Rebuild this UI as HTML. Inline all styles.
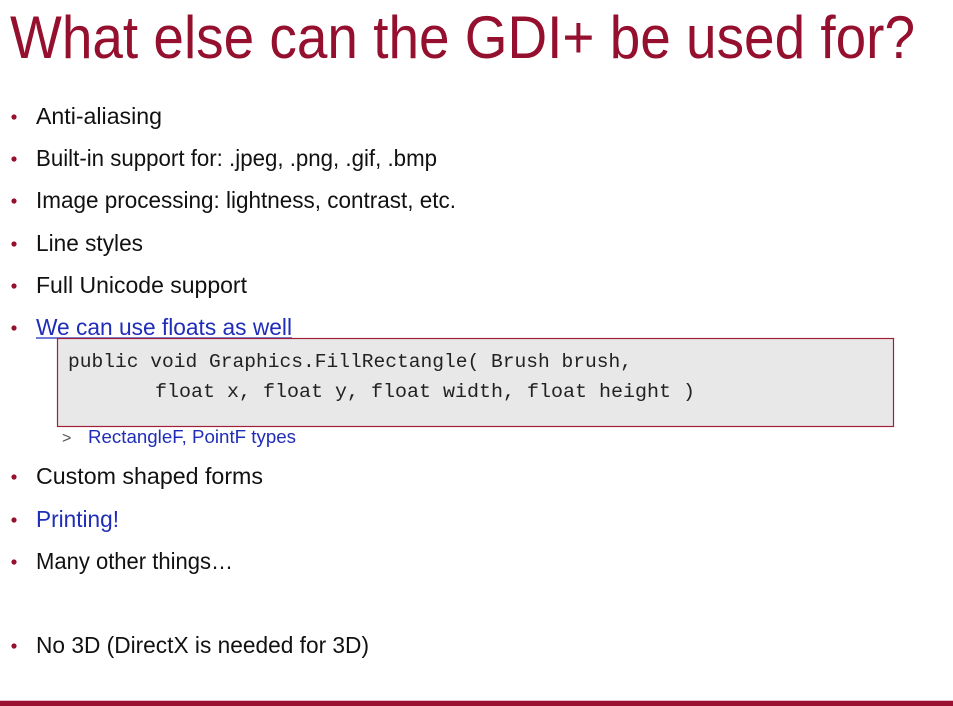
<!DOCTYPE html>
<html><head><meta charset="utf-8"><style>
html,body{margin:0;padding:0;background:#fff;width:953px;height:706px;overflow:hidden}
svg{display:block}
</style></head><body>
<svg width="953" height="706" viewBox="0 0 953 706" xmlns="http://www.w3.org/2000/svg" font-family="Liberation Sans, sans-serif">
<text x="10" y="58" font-size="60" fill="#95102e" textLength="905" lengthAdjust="spacingAndGlyphs">What else can the GDI+ be used for?</text>
<g fill="#95102e">
<circle cx="14" cy="117" r="2.6"/><circle cx="14" cy="159" r="2.6"/><circle cx="14" cy="201" r="2.6"/>
<circle cx="14" cy="244" r="2.6"/><circle cx="14" cy="286" r="2.6"/><circle cx="14" cy="328" r="2.6"/>
<circle cx="14" cy="477" r="2.6"/><circle cx="14" cy="520" r="2.6"/><circle cx="14" cy="562" r="2.6"/>
<circle cx="14" cy="646" r="2.6"/>
</g>
<g font-size="23" fill="#111" lengthAdjust="spacingAndGlyphs">
<text x="36" y="124" textLength="126" lengthAdjust="spacingAndGlyphs">Anti-aliasing</text>
<text x="36" y="166" textLength="401" lengthAdjust="spacingAndGlyphs">Built-in support for: .jpeg, .png, .gif, .bmp</text>
<text x="36" y="208" textLength="420" lengthAdjust="spacingAndGlyphs">Image processing: lightness, contrast, etc.</text>
<text x="36" y="251" textLength="107" lengthAdjust="spacingAndGlyphs">Line styles</text>
<text x="36" y="293" textLength="211" lengthAdjust="spacingAndGlyphs">Full Unicode support</text>
<text x="36" y="335" textLength="256" lengthAdjust="spacingAndGlyphs" fill="#1f2db8">We can use floats as well</text>
<text x="36" y="484" textLength="227" lengthAdjust="spacingAndGlyphs">Custom shaped forms</text>
<text x="36" y="527" textLength="83" lengthAdjust="spacingAndGlyphs" fill="#1f2db8">Printing!</text>
<text x="36" y="569" textLength="197" lengthAdjust="spacingAndGlyphs">Many other things…</text>
<text x="36" y="653" textLength="333" lengthAdjust="spacingAndGlyphs">No 3D (DirectX is needed for 3D)</text>
</g>
<line x1="36" y1="338" x2="292" y2="338" stroke="#1f2db8" stroke-width="1.2"/>
<rect x="57.5" y="338.5" width="836" height="88" fill="#e8e8e8" stroke="#a0203a" stroke-width="1.2"/>
<g font-family="Liberation Mono, monospace" font-size="19" fill="#222">
<text x="68" y="367" textLength="564" lengthAdjust="spacingAndGlyphs">public void Graphics.FillRectangle( Brush brush,</text>
<text x="155" y="397" textLength="540" lengthAdjust="spacingAndGlyphs">float x, float y, float width, float height )</text>
</g>
<text x="62" y="443" font-size="16" fill="#555">&gt;</text>
<text x="88" y="443" font-size="18" fill="#1f2db8" textLength="208" lengthAdjust="spacingAndGlyphs">RectangleF, PointF types</text>
<rect x="0" y="700" width="953" height="1" fill="#e8c0c8"/>
<rect x="0" y="701" width="953" height="5" fill="#9b1030"/>
</svg>
</body></html>
